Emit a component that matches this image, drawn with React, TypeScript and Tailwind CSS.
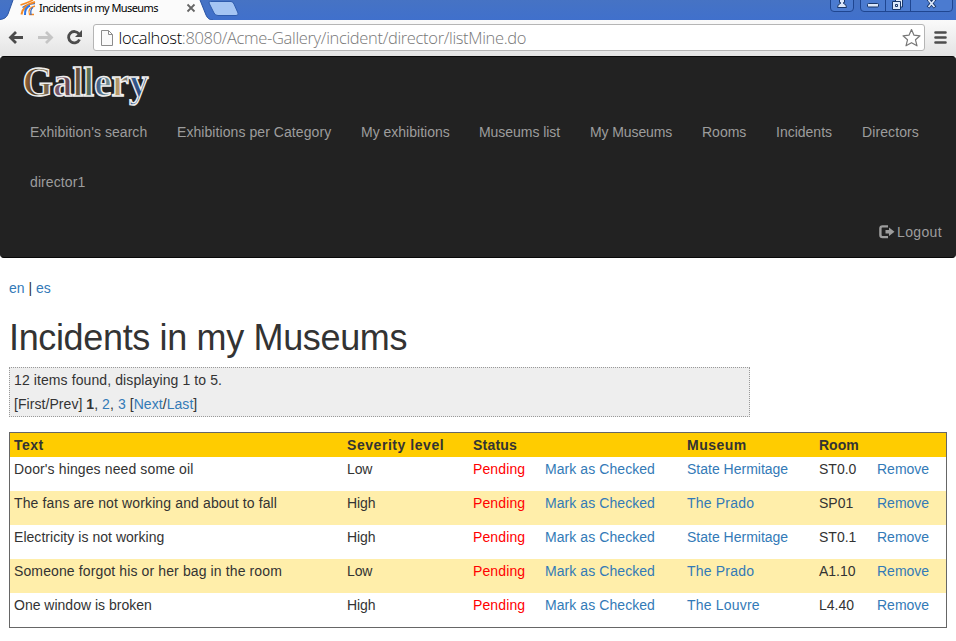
import { ReactNode } from 'react';

const arial = "font-['Liberation_Sans',Arial,sans-serif]";

const navItems = [
  { label: "Exhibition's search", cls: 'w-[147px] tracking-[0.05px]' },
  { label: 'Exhibitions per Category', cls: 'w-[184px] tracking-[0.07px]' },
  { label: 'My exhibitions', cls: 'w-[118px]' },
  { label: 'Museums list', cls: 'w-[111px] tracking-[-0.05px]' },
  { label: 'My Museums', cls: 'w-[112px] tracking-[-0.1px]' },
  { label: 'Rooms', cls: 'w-[74px]' },
  { label: 'Incidents', cls: 'w-[86px]' },
  { label: 'Directors', cls: 'w-[87px] tracking-[0.1px]' },
  { label: 'director1', cls: 'w-[86px] tracking-[0.1px]' },
];

const rows = [
  { text: "Door's hinges need some oil", cls: 'tracking-[0.12px]', level: 'Low', museum: 'State Hermitage', room: 'ST0.0' },
  { text: 'The fans are not working and about to fall', cls: 'tracking-[0.13px]', level: 'High', museum: 'The Prado', room: 'SP01' },
  { text: 'Electricity is not working', cls: 'tracking-[0.04px]', level: 'High', museum: 'State Hermitage', room: 'ST0.1' },
  { text: 'Someone forgot his or her bag in the room', cls: 'tracking-[0.12px]', level: 'Low', museum: 'The Prado', room: 'A1.10' },
  { text: 'One window is broken', cls: '', level: 'High', museum: 'The Louvre', room: 'L4.40' },
];

const museumTracking: Record<string, string> = {
  'State Hermitage': '',
  'The Prado': 'tracking-[0.2px]',
  'The Louvre': 'tracking-[0.2px]',
};

function Link({ children }: { children: ReactNode }) {
  return <a className="text-[#337ab7]">{children}</a>;
}

function TitleBar() {
  return (
    <div className="h-5 flex bg-linear-to-b from-[#4673c4] to-[#4070cc]">
      <svg width="250" height="20" className="shrink-0">
        <path d="M0 19.500 Q6 19 8 14 L13 0 H200 L206 15 Q208 20 213 20 H0Z" fill="#fbfbfb" />
        <path d="M0 19.500 Q6 19 8 14 L13 0 M200 0 L206 15 Q208 20 213 20" fill="none" stroke="#2b55a3" />
        <path d="M210.500 1.500 H231 Q233 1.500 234 4 L238 13 Q239 15.500 236 15.500 H218 Q215 15.500 214 13 L209 3 Q208.500 1.500 210.500 1.500Z" fill="#a5c5f3" stroke="#2f5cae" />
        <g fill="none">
          <path d="M20.500 5 Q27 3 33 0" stroke="#f58a25" strokeWidth="1.500" />
          <path d="M22.500 7.500 Q29 3.500 35 3.500" stroke="#3469c5" strokeWidth="1.300" />
          <path d="M21.500 14.500 Q23 5 35 2" stroke="#f58a25" strokeWidth="2" />
          <path d="M25 15 Q24.500 8 30 5.500" stroke="#2f76e8" strokeWidth="2" />
          <path d="M35 6 Q27 8 29.500 14.500 H34" stroke="#f58a25" strokeWidth="1.300" />
          <path d="M31 15 Q30 9 33 7.500" stroke="#3469c5" strokeWidth="1.300" />
        </g>
        <text x="39" y="12" fontSize="11" textLength="119.500" className="font-['Noto_Sans',sans-serif]" fill="#000">Incidents in my Museums</text>
        <path d="M187.500 4.500 L194.500 11.500 M194.500 4.500 L187.500 11.500" stroke="#666" strokeWidth="1.800" />
      </svg>
      <svg width="706" height="20" viewBox="250 0 706 20" className="shrink-0">
        <g fill="#4b7bd0" stroke="#1f4691">
          <path d="M830.500 -2 V8 Q830.500 11.500 834 11.500 H850 Q853.500 11.500 853.500 8 V-2Z" />
          <path d="M860.500 -2 V8 Q860.500 11.500 864 11.500 H949 Q952.500 11.500 952.500 8 V-2Z M885.500 0V11 M910.500 0V11" />
        </g>
        <g fill="#dbe7fa" stroke="#183669">
          <path d="M839.500 -1 V2.500 H840.500 V3.500 Q837.500 4 837.500 7.500 H846.500 Q846.500 4 843.500 3.500 V2.500 H844.500 V-1Z" />
          <rect x="867.500" y="3.500" width="11" height="3.500" rx="1" />
          <path d="M895.500 -1 H902.500 V7 H895.500Z" />
          <path d="M892.500 1.500 H900.500 V9.500 H892.500Z M895.500 4.500 H897.500 V6.500 H895.500Z" />
        </g>
        <path d="M928 -1 L935 7.500 M935 -1 L928 7.500" stroke="#183669" strokeWidth="3.500" />
        <path d="M928.500 0 L934.500 7 M934.500 0 L928.500 7" stroke="#dbe7fa" strokeWidth="1.800" />
      </svg>
    </div>
  );
}

function Toolbar() {
  return (
    <div className="h-9 flex items-start bg-linear-to-b from-[#fafafa] to-[#e4e4e4]">
      <svg width="93" height="36" className="shrink-0" fill="none">
        <path d="M10.500 17.500 H23 M16 12 L10.500 17.500 L16 23" stroke="#4b4b4b" strokeWidth="2.800" />
        <path d="M38 17.500 H51 M46 12 L51.500 17.500 L46 23" stroke="#c5c5c5" strokeWidth="2.800" />
        <path d="M79 14 A5.700 5.700 0 1 0 79.500 19.500" stroke="#4b4b4b" strokeWidth="2.800" />
        <path d="M82 10 V17 H75Z" fill="#4b4b4b" />
      </svg>
      <div className="mt-1 h-[27px] w-[832px] border border-[#b5b5b5] rounded-[3px] bg-white flex">
        <svg width="830" height="25">
          <path d="M7.500 5.500 H14.500 L18.500 9.500 V20.500 H7.500Z M14.500 5.500 V9.500 H18.500" fill="#fafafa" stroke="#8c8c8c" />
          <text x="24.500" y="19" fontSize="16.500" textLength="408" className="font-['Open_Sans','Noto_Sans',sans-serif] font-light" fill="#777"><tspan fill="#000">localhost</tspan>:8080/Acme-Gallery/incident/director/listMine.do</text>
          <path d="M817.500 4.500 L820 10.200 L826 10.800 L821.500 14.800 L823 20.800 L817.500 17.700 L812 20.800 L813.500 14.800 L809 10.800 L815 10.200Z" fill="#fff" stroke="#777" strokeWidth="1.200" strokeLinejoin="round" />
        </svg>
      </div>
      <svg width="31" height="36" stroke="#4d4d4d" strokeWidth="2.600" strokeLinecap="round">
        <path d="M10.500 12.500 H20.500 M10.500 17.500 H20.500 M10.500 22.500 H20.500" />
      </svg>
    </div>
  );
}

function Logo() {
  return (
    <svg width="160" height="51" viewBox="0 57 160 51" className="block overflow-visible">
      <defs>
        <linearGradient id="paint" gradientUnits="userSpaceOnUse" x1="22" y1="66" x2="148" y2="76">
          <stop offset="0" stopColor="#b5713a" />
          <stop offset=".1" stopColor="#4a3a24" />
          <stop offset=".17" stopColor="#7a6a42" />
          <stop offset=".3" stopColor="#70506b" />
          <stop offset=".42" stopColor="#63413a" />
          <stop offset=".5" stopColor="#66743f" />
          <stop offset=".58" stopColor="#35588a" />
          <stop offset=".68" stopColor="#6a8990" />
          <stop offset=".77" stopColor="#c09a60" />
          <stop offset=".88" stopColor="#34588a" />
          <stop offset="1" stopColor="#243f75" />
        </linearGradient>
      </defs>
      <text x="21.500" y="95.500" fontSize="43" textLength="126" lengthAdjust="spacingAndGlyphs" fill="url(#paint)" stroke="#eee" strokeWidth="1.500" className="font-['Liberation_Serif',serif] font-bold">Gallery</text>
    </svg>
  );
}

export default function App() {
  return (
    <div className={`${arial} w-[956px] h-[641px] overflow-hidden bg-white text-sm text-[#333]`}>
      <TitleBar />
      <Toolbar />
      <nav className="h-[202px] rounded-[4px] border border-x-[#222] border-y-[#080808] bg-[#222] text-[#9d9d9d]">
        <Logo />
        <div className="-mt-px flex flex-wrap pl-[14px]">
          {navItems.map((n) => (
            <a key={n.label} className={`${n.cls} h-[50px] px-[15px] pt-[15px] leading-5 whitespace-nowrap`}>{n.label}</a>
          ))}
        </div>
        <div className="flex justify-end pr-[13px] pt-[15px] leading-5">
          <svg width="16" height="14" viewBox="0 0 16 14" className="mt-[3px] mr-[2px]">
            <path d="M9 1.400 H3.500 Q1.400 1.400 1.400 3.500 V10 Q1.400 12.100 3.500 12.100 H9" fill="none" stroke="#9d9d9d" strokeWidth="2.400" />
            <path d="M6.500 5 H10 V2.500 L15.500 6.800 L10 11 V8.500 H6.500Z" fill="#9d9d9d" />
          </svg>
          <span className="tracking-[0.35px]">Logout</span>
        </div>
      </nav>
      <main className="px-[9px] pt-5">
        <div className="leading-5"><Link>en</Link> | <Link>es</Link></div>
        <h1 className="mt-5 text-4xl leading-[39px] tracking-[-0.35px]">Incidents in my Museums</h1>
        <div className="mt-[10px] w-[741px] h-[50px] border border-dotted border-[#999] bg-[#eee] pl-1 pt-px">
          <div className="h-6 leading-[22px] tracking-[0.1px]">12 items found, displaying 1 to 5.</div>
          <div className="leading-[22px] tracking-[0.06px]">[First/Prev] <b>1</b>, <Link>2</Link>, <Link>3</Link> [<Link>Next</Link>/<Link>Last</Link>]</div>
        </div>
        <table className="mt-[15px] w-[938px] table-fixed border border-[#666] border-separate border-spacing-0 text-left leading-5">
          <colgroup>
            <col className="w-[333px]" /><col className="w-[126px]" /><col className="w-[72px]" /><col className="w-[142px]" />
            <col className="w-[132px]" /><col className="w-[58px]" /><col />
          </colgroup>
          <thead>
            <tr className="h-6 bg-[#fc0]">
              <th className="p-0 pl-1 tracking-[0.5px]">Text</th>
              <th className="p-0 pl-1 tracking-[0.55px]">Severity level</th>
              <th className="p-0 pl-1 tracking-[0.2px]">Status</th>
              <th />
              <th className="p-0 pl-1 tracking-[0.5px]">Museum</th>
              <th className="p-0 pl-1">Room</th>
              <th />
            </tr>
          </thead>
          <tbody>
            {rows.map(({ text, cls, level, museum, room }) => (
              <tr key={text} className="h-[34px] align-top even:bg-[#fea] [&>td]:pl-1 [&>td]:pt-[2px] whitespace-nowrap">
                <td className={cls}>{text}</td>
                <td className="tracking-[-0.1px]">{level}</td>
                <td className="text-[#f00] tracking-[0.12px]">Pending</td>
                <td className="tracking-[0.07px]"><Link>Mark as Checked</Link></td>
                <td className={museumTracking[museum]}><Link>{museum}</Link></td>
                <td>{room}</td>
                <td><Link>Remove</Link></td>
              </tr>
            ))}
          </tbody>
        </table>
      </main>
    </div>
  );
}
